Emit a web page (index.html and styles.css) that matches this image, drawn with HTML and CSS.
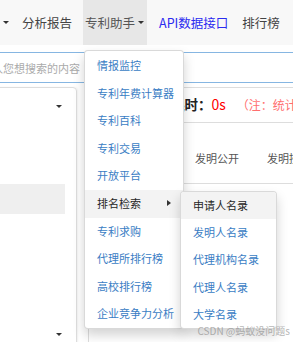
FILE: index.html
```html
<!DOCTYPE html>
<html lang="zh-CN">
<head>
<meta charset="utf-8">
<link rel="stylesheet" href="styles.css">
</head>
<body>
<nav class="navbar">
  <ul class="nav">
    <li class="nav-item caret-item"><span class="caret"></span></li>
    <li class="nav-item report">分析报告</li>
    <li class="nav-item nav-open">专利助手<span class="caret"></span>
      <ul class="dropdown">
        <li>情报监控</li>
        <li>专利年费计算器</li>
        <li>专利百科</li>
        <li>专利交易</li>
        <li>开放平台</li>
        <li class="hl">排名检索<span class="caret-right"></span>
          <ul class="submenu">
            <li class="hl">申请人名录</li>
            <li>发明人名录</li>
            <li>代理机构名录</li>
            <li>代理人名录</li>
            <li>大学名录</li>
          </ul>
        </li>
        <li>专利求购</li>
        <li>代理所排行榜</li>
        <li>高校排行榜</li>
        <li>企业竞争力分析</li>
      </ul>
    </li>
    <li class="nav-item api">API数据接口</li>
    <li class="nav-item rank">排行榜</li>
  </ul>
</nav>

<div class="search">
  <input class="search-input" type="text" placeholder="输入您想搜索的内容">
</div>

<div class="content">
  <aside class="left-panel">
    <div class="select-row"><span class="caret"></span></div>
    <div class="row"></div>
    <div class="row"></div>
    <div class="row row-selected"></div>
    <div class="row"></div>
    <div class="row"></div>
    <div class="row"></div>
    <div class="select-row second"><span class="caret"></span></div>
  </aside>
  <main class="right-panel">
    <div class="stats"><span class="label">耗时：</span><span class="time">0s</span><span class="note">（注：统计数据仅供参考）</span></div>
    <div class="tabs"><span>发明公开</span><span>发明授权</span><span>实用新型</span></div>
  </main>
</div>

<div class="watermark">CSDN @蚂蚁没问题s</div>
</body>
</html>
```

FILE: styles.css
```css
* {
  box-sizing: border-box;
  margin: 0;
  padding: 0;
}

html,
body {
  width: 293px;
  height: 342px;
  overflow: hidden;
  background: #fff;
}

body {
  position: relative;
  font-family: "Noto Sans CJK SC", "Microsoft YaHei", sans-serif;
  color: #333;
}

ul {
  list-style: none;
}

/* ---------- navbar ---------- */
.navbar {
  height: 45px;
  background: #f8f8f8;
}

.nav {
  display: flex;
  height: 45px;
  padding-left: 3px;
}

.nav-item {
  display: flex;
  align-items: center;
  font-size: 12.5px;
  line-height: 45px;
  color: #444;
  white-space: nowrap;
}

.caret-item {
  width: 6px;
}

.report {
  margin-left: 13px;
}

.nav-open {
  position: relative;
  margin-left: 11px;
  padding: 0 3px 0 2px;
  background: #e7e7e7;
  color: #555;
}

.api {
  margin-left: 12px;
  color: #2b2bf0;
}

.rank {
  margin-left: 14px;
}

.caret {
  display: inline-block;
  width: 0;
  height: 0;
  border-top: 3px solid #333;
  border-left: 3px solid transparent;
  border-right: 3px solid transparent;
}

.nav-open > .caret {
  margin-left: 3px;
}

/* ---------- dropdown ---------- */
.dropdown,
.submenu {
  position: absolute;
  background: #fff;
  border: 1px solid rgba(0, 0, 0, 0.15);
  border-radius: 4px;
  box-shadow: 0 6px 12px rgba(0, 0, 0, 0.175);
}

.dropdown {
  top: 50px;
  left: 1px;
  width: 100px;
  padding-top: 1px;
  z-index: 10;
}

.dropdown > li {
  position: relative;
  height: 27.6px;
  line-height: 27.6px;
  padding-left: 12px;
  font-size: 11px;
  color: #3a7dc4;
  white-space: nowrap;
}

.dropdown li.hl {
  background: #f3f3f3;
  color: #262626;
}

.caret-right {
  position: absolute;
  right: 12px;
  top: 50%;
  margin-top: -3.5px;
  width: 0;
  height: 0;
  border-left: 4px solid #333;
  border-top: 3.5px solid transparent;
  border-bottom: 3.5px solid transparent;
}

.submenu {
  top: 1px;
  left: 95px;
  width: 97px;
  overflow: hidden;
  z-index: 11;
}

.submenu > li {
  height: 27.2px;
  line-height: 27.2px;
  padding-left: 12px;
  font-size: 11px;
  color: #3a7dc4;
  white-space: nowrap;
}

/* ---------- search ---------- */
.search {
  margin-top: 7px;
  margin-left: -26px;
}

.search-input {
  display: block;
  width: 360px;
  height: 31px;
  padding: 0 6px;
  border: 1px solid #86b6e2;
  font-family: inherit;
  font-size: 11px;
  color: #555;
  outline: none;
  background: #fff;
}

.search-input::placeholder {
  color: #aaa;
}

/* ---------- content ---------- */
.content {
  display: flex;
  gap: 11px;
  margin-top: 4px;
}

.left-panel {
  flex: none;
  width: 82px;
  height: 300px;
  margin-left: -5px;
  border: 1px solid #ddd;
  border-radius: 4px;
  box-shadow: 1px 0 2px rgba(0, 0, 0, 0.06);
}

.select-row {
  display: flex;
  align-items: center;
  justify-content: flex-end;
  height: 36px;
  padding-right: 14px;
}

.select-row.second {
  margin-top: 12px;
}

.row {
  height: 30px;
  margin-right: 11px;
}

.row-selected {
  background: #efefef;
}

.right-panel {
  flex: 1;
  min-width: 0;
  height: 300px;
  border: 1px solid #ddd;
  border-right: none;
}

.stats {
  height: 35px;
  line-height: 30px;
  padding-left: 82px;
  border-bottom: 1px solid #ddd;
  white-space: nowrap;
  overflow: hidden;
}

.label {
  font-size: 13.5px;
  font-weight: bold;
  color: #222;
}

.time {
  font-size: 14px;
  color: #f00;
}

.note {
  margin-left: 11px;
  font-size: 12px;
  color: #ff6f6f;
}

.tabs {
  display: flex;
  gap: 28px;
  height: 61px;
  padding: 25px 0 0 106px;
  border-bottom: 1px solid #ddd;
  font-size: 11px;
  line-height: 20px;
  color: #555;
  white-space: nowrap;
  overflow: hidden;
}

/* ---------- watermark ---------- */
.watermark {
  position: absolute;
  right: 3px;
  top: 324px;
  font-size: 10px;
  line-height: 14px;
  color: rgba(120, 120, 120, 0.55);
  white-space: nowrap;
  z-index: 20;
}
```
